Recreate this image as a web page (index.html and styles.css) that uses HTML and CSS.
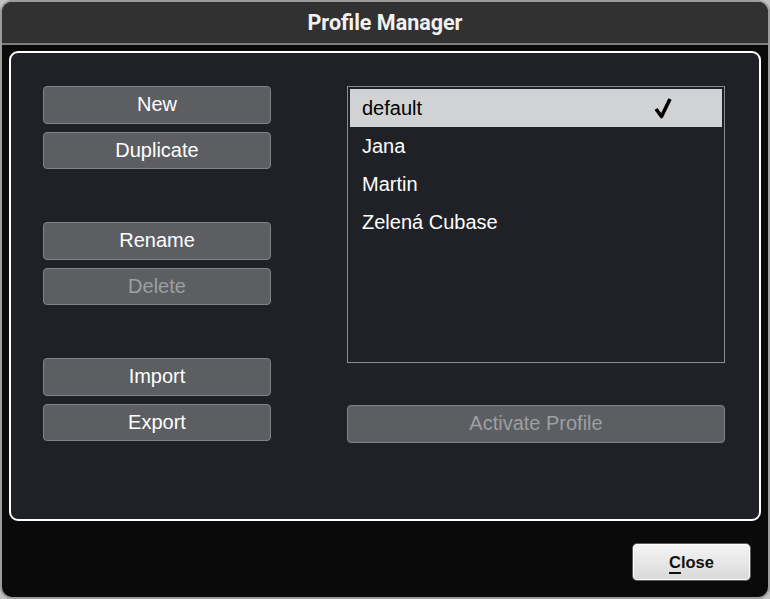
FILE: index.html
```html
<html>
	<head>
		<title>Profile Manager</title>
		<link rel="stylesheet" href="styles.css">
	</head>
	<body>
		<div class="window">
			<div class="titlebar">Profile Manager</div>
			<div class="content">
				<div class="panel">
					<div class="buttons">
						<div class="group">
							<div class="btn">New</div>
							<div class="btn">Duplicate</div>
						</div>
						<div class="group">
							<div class="btn">Rename</div>
							<div class="btn disabled">Delete</div>
						</div>
						<div class="group">
							<div class="btn">Import</div>
							<div class="btn">Export</div>
						</div>
					</div>
					<div class="profiles">
						<div class="list">
							<div class="row selected">
								<span>default</span>
								<svg class="check" width="18" height="22" viewBox="0 0 18 22"><polyline points="2,12 7.5,19.5 16,2" fill="none" stroke="#000" stroke-width="3.6" stroke-linejoin="round"/></svg>
							</div>
							<div class="row"><span>Jana</span></div>
							<div class="row"><span>Martin</span></div>
							<div class="row"><span>Zelená Cubase</span></div>
						</div>
						<div class="btn disabled wide">Activate Profile</div>
					</div>
				</div>
				<div class="footer">
					<div class="close"><u>C</u>lose</div>
				</div>
			</div>
		</div>
	</body>
</html>
```

FILE: styles.css
```css
body
{
	margin:0;
	background:#c2c2c2;
	font-family:"Liberation Sans", Arial, sans-serif;
}
.window
{
	width:770px;
	height:599px;
	box-sizing:border-box;
	border:2px solid #9c9c9c;
	border-radius:12px;
	overflow:hidden;
	background:#0a0a0a;
	display:flex;
	flex-direction:column;
}
.titlebar
{
	height:41px;
	flex:none;
	background:#313131;
	border-bottom:2px solid #7c7c7c;
	color:#f2f2f2;
	font-family:Roboto, "Liberation Sans", sans-serif;
	font-weight:700;
	font-size:21.5px;
	display:flex;
	align-items:center;
	justify-content:center;
}
.content
{
	flex:1;
	display:flex;
	flex-direction:column;
	padding:6px 7px 0 7px;
}
.panel
{
	height:470px;
	flex:none;
	box-sizing:border-box;
	border:2px solid #fff;
	border-radius:9px;
	background:#1f2126;
	padding:33px 34px 0 32px;
	display:flex;
}
.buttons
{
	width:228px;
	display:flex;
	flex-direction:column;
	gap:53px;
}
.group
{
	display:flex;
	flex-direction:column;
	gap:8px;
}
.btn
{
	height:37.5px;
	flex:none;
	box-sizing:border-box;
	border:1px solid #818387;
	border-radius:4px;
	background:#5c5e62;
	color:#fff;
	font-size:20px;
	display:flex;
	align-items:center;
	justify-content:center;
}
.btn.disabled
{
	color:#9d9fa2;
}
.profiles
{
	width:378px;
	margin-left:76px;
	display:flex;
	flex-direction:column;
	gap:42px;
}
.list
{
	height:277px;
	flex:none;
	box-sizing:border-box;
	border:1px solid #8c8d8f;
	padding:2px;
}
.row
{
	height:38px;
	padding:0 50px 0 12px;
	display:flex;
	align-items:center;
	justify-content:space-between;
	color:#fff;
	font-size:20px;
}
.row.selected
{
	background:#d1d2d3;
	color:#000;
}
.check
{
	display:block;
}
.footer
{
	flex:1;
	display:flex;
	justify-content:flex-end;
	align-items:flex-start;
	padding:22px 10px 0 0;
}
.close
{
	width:119px;
	height:38px;
	box-sizing:border-box;
	border:1px solid #5e5e5e;
	border-radius:5px;
	box-shadow:inset 0 0 0 1px #fdfdfd;
	background:linear-gradient(#f5f5f5, #d9d9d9);
	color:#111;
	font-weight:700;
	font-size:16.5px;
	display:flex;
	align-items:center;
	justify-content:center;
}
.close u
{
	text-decoration-thickness:2px;
	text-underline-offset:4px;
}
```
